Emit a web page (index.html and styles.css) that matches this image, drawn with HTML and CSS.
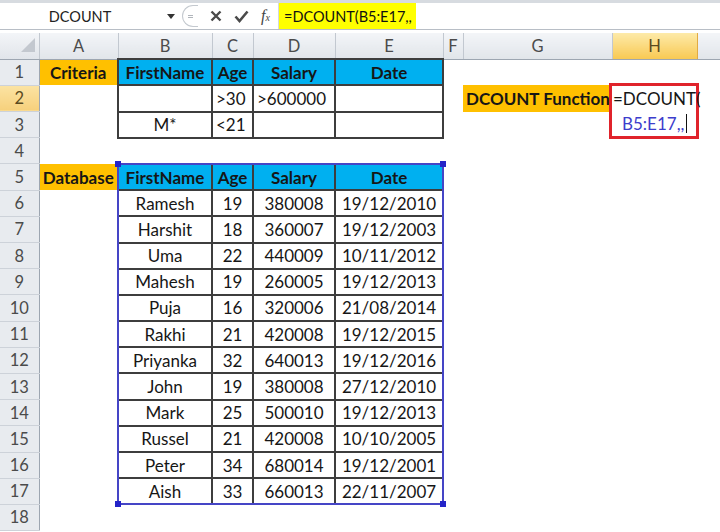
FILE: index.html
```html
<!DOCTYPE html>
<html lang="en">

<head>
    <meta charset="UTF-8">
    <meta name="viewport" content="width=device-width, initial-scale=1.0">
    <title>DCOUNT</title>
    <link rel="stylesheet" href="styles.css">
</head>

<body>
    <div class="formula-bar">
        <div class="name-box">DCOUNT</div>
        <div class="drop"><span class="caret"></span></div>
        <div class="grip"><span></span></div>
        <div class="bar-btns">
            <svg width="12" height="12" viewBox="0 0 12 12"><path d="M1.5 1.5 L10.5 10.5 M10.5 1.5 L1.5 10.5" stroke="#4a4a4a" stroke-width="2.4" fill="none"/></svg>
            <svg width="15" height="13" viewBox="0 0 15 13"><path d="M1.5 6.5 L5.5 11 L13.5 1.5" stroke="#4a4a4a" stroke-width="2.6" fill="none"/></svg>
            <span class="fx">f<small>x</small></span>
        </div>
        <div class="formula-input"><span class="hl">=DCOUNT(B5:E17,,</span></div>
    </div>

    <div class="sheet">
        <table class="grid">
            <colgroup>
                <col style="width:39px">
                <col style="width:79px">
                <col style="width:94px">
                <col style="width:41px">
                <col style="width:82px">
                <col style="width:108px">
                <col style="width:20px">
                <col style="width:149px">
                <col style="width:85px">
                <col style="width:23px">
            </colgroup>
            <tr class="col-heads">
                <th class="corner"><svg width="14" height="14" viewBox="0 0 14 14"><polygon points="14,0 14,14 0,14" fill="#c3c8cf"/></svg></th>
                <th>A</th><th>B</th><th>C</th><th>D</th><th>E</th><th>F</th><th>G</th><th class="sel">H</th><th></th>
            </tr>
            <tr>
                <td class="rh">1</td>
                <td class="orange">Criteria</td>
                <td class="b blue">FirstName</td><td class="b blue">Age</td><td class="b blue">Salary</td><td class="b blue">Date</td>
                <td></td><td></td><td></td><td></td>
            </tr>
            <tr>
                <td class="rh sel">2</td>
                <td></td>
                <td class="b"></td><td class="b left">&gt;30</td><td class="b left">&gt;600000</td><td class="b"></td>
                <td></td><td class="orange left">DCOUNT Function</td><td></td><td></td>
            </tr>
            <tr>
                <td class="rh">3</td>
                <td></td>
                <td class="b">M*</td><td class="b left">&lt;21</td><td class="b"></td><td class="b"></td>
                <td></td><td></td><td></td><td></td>
            </tr>
            <tr>
                <td class="rh">4</td>
                <td></td><td></td><td></td><td></td><td></td><td></td><td></td><td></td><td></td>
            </tr>
            <tr>
                <td class="rh">5</td>
                <td class="orange">Database</td>
                <td class="b blue">FirstName</td><td class="b blue">Age</td><td class="b blue">Salary</td><td class="b blue">Date</td>
                <td></td><td></td><td></td><td></td>
            </tr>
            <tr><td class="rh">6</td><td></td><td class="b">Ramesh</td><td class="b">19</td><td class="b">380008</td><td class="b">19/12/2010</td><td></td><td></td><td></td><td></td></tr>
            <tr><td class="rh">7</td><td></td><td class="b">Harshit</td><td class="b">18</td><td class="b">360007</td><td class="b">19/12/2003</td><td></td><td></td><td></td><td></td></tr>
            <tr><td class="rh">8</td><td></td><td class="b">Uma</td><td class="b">22</td><td class="b">440009</td><td class="b">10/11/2012</td><td></td><td></td><td></td><td></td></tr>
            <tr><td class="rh">9</td><td></td><td class="b">Mahesh</td><td class="b">19</td><td class="b">260005</td><td class="b">19/12/2013</td><td></td><td></td><td></td><td></td></tr>
            <tr><td class="rh">10</td><td></td><td class="b">Puja</td><td class="b">16</td><td class="b">320006</td><td class="b">21/08/2014</td><td></td><td></td><td></td><td></td></tr>
            <tr><td class="rh">11</td><td></td><td class="b">Rakhi</td><td class="b">21</td><td class="b">420008</td><td class="b">19/12/2015</td><td></td><td></td><td></td><td></td></tr>
            <tr><td class="rh">12</td><td></td><td class="b">Priyanka</td><td class="b">32</td><td class="b">640013</td><td class="b">19/12/2016</td><td></td><td></td><td></td><td></td></tr>
            <tr><td class="rh">13</td><td></td><td class="b">John</td><td class="b">19</td><td class="b">380008</td><td class="b">27/12/2010</td><td></td><td></td><td></td><td></td></tr>
            <tr><td class="rh">14</td><td></td><td class="b">Mark</td><td class="b">25</td><td class="b">500010</td><td class="b">19/12/2013</td><td></td><td></td><td></td><td></td></tr>
            <tr><td class="rh">15</td><td></td><td class="b">Russel</td><td class="b">21</td><td class="b">420008</td><td class="b">10/10/2005</td><td></td><td></td><td></td><td></td></tr>
            <tr><td class="rh">16</td><td></td><td class="b">Peter</td><td class="b">34</td><td class="b">680014</td><td class="b">19/12/2001</td><td></td><td></td><td></td><td></td></tr>
            <tr><td class="rh">17</td><td></td><td class="b">Aish</td><td class="b">33</td><td class="b">660013</td><td class="b">22/11/2007</td><td></td><td></td><td></td><td></td></tr>
            <tr>
                <td class="rh">18</td>
                <td></td><td></td><td></td><td></td><td></td><td></td><td></td><td></td><td></td>
            </tr>
        </table>

        <!-- range picked for the formula -->
        <div class="range">
            <i class="h tl"></i><i class="h tr"></i><i class="h bl"></i><i class="h br"></i>
        </div>

        <!-- cell being edited -->
        <div class="edit-box">
            <div>=DCOUNT(</div>
            <div class="ref">B5:E17,,<span class="cursor"></span></div>
        </div>
    </div>
</body>

</html>
```

FILE: styles.css
```css
* {
    margin: 0;
    padding: 0;
    box-sizing: border-box;
}

body {
    width: 720px;
    height: 532px;
    overflow: hidden;
    background-color: #fff;
    font-family: Lato, "Open Sans", sans-serif;
    color: #161616;
}

/* formula bar */
.formula-bar {
    height: 30px;
    display: flex;
    align-items: center;
    border-top: 3px solid #d7dbe0;
    border-bottom: 1px solid #b8bec6;
    margin-bottom: 3px;
}

.name-box {
    width: 160px;
    text-align: center;
    font-size: 14.5px;
    color: #222;
}

.drop {
    width: 22px;
    display: flex;
    justify-content: center;
}

.caret {
    border-left: 4px solid transparent;
    border-right: 4px solid transparent;
    border-top: 5px solid #333;
}

.grip {
    width: 16px;
    height: 22px;
    border: 1px solid #c4c9cf;
    border-right: none;
    border-radius: 11px 0 0 11px;
    display: flex;
    align-items: center;
    justify-content: center;
}

.grip span {
    width: 5px;
    height: 3px;
    border-top: 1px solid #b0b5bb;
    border-bottom: 1px solid #b0b5bb;
}

.bar-btns {
    width: 80px;
    display: flex;
    align-items: center;
    gap: 12px;
    padding-left: 12px;
}

.fx {
    font-family: "Liberation Serif", serif;
    font-style: italic;
    font-size: 16px;
    color: #444;
}

.fx small {
    font-size: 10px;
}

.formula-input {
    flex: 1;
    height: 26px;
    display: flex;
    align-items: stretch;
    border-left: 1px solid #d4d8dd;
}

.hl {
    background-color: #ffff00;
    font-size: 14.5px;
    padding: 0 4px 0 5px;
    display: flex;
    align-items: center;
    color: #111;
}

/* sheet */
.sheet {
    position: relative;
}

table.grid {
    border-collapse: collapse;
    table-layout: fixed;
    width: 720px;
}

.grid th {
    height: 26px;
    font-weight: normal;
    font-size: 16.5px;
    color: #4b4b4b;
    background: linear-gradient(#f3f5f8, #e1e5ea);
    border-right: 1px solid #c2c8d0;
    border-bottom: 1px solid #9da6b1;
}

.grid th.corner {
    text-align: right;
    vertical-align: bottom;
    padding: 0 4px 3px 0;
}

.grid th.sel {
    background: linear-gradient(#fdeaa9, #f8c953);
    border-right: 1px solid #e1aa43;
    color: #5a4a20;
}

.grid tr {
    height: 26.2px;
}

.grid td {
    font-size: 17px;
    text-align: center;
    white-space: nowrap;
    padding: 0 3px;
}

.grid td.rh {
    font-size: 16.5px;
    color: #4b4b4b;
    background-color: #e8ebef;
    border-right: 1px solid #9da6b1;
    border-bottom: 1px solid #cdd2d9;
}

.grid td.rh.sel {
    background: linear-gradient(#fbe3a3, #f6d07c);
    color: #5a4a20;
}

.grid td.b {
    border: 2px solid #3d3d3d;
}

.grid td.left {
    text-align: left;
}

.grid td.blue {
    background-color: #00b0f0;
    font-weight: bold;
}

.grid td.orange {
    background-color: #ffc000;
    font-weight: bold;
    overflow: hidden;
}

.range {
    position: absolute;
    left: 117px;
    top: 130px;
    width: 327px;
    height: 342px;
    border: 2px solid #4545c6;
}

.range .h {
    position: absolute;
    width: 6px;
    height: 6px;
    background-color: #2424c8;
}

.range .tl { left: -4px; top: -4px; }
.range .tr { right: -4px; top: -4px; }
.range .bl { left: -4px; bottom: -4px; }
.range .br { right: -4px; bottom: -4px; }

.edit-box {
    position: absolute;
    left: 609px;
    top: 50px;
    width: 90px;
    height: 56px;
    border: 3px solid #e0232b;
    background-color: #fff;
    font-size: 17px;
    line-height: 25px;
    padding-left: 1px;
    white-space: nowrap;
}

.edit-box .ref {
    padding-left: 9px;
    color: #3d3dcc;
    display: flex;
    align-items: center;
}

.cursor {
    display: inline-block;
    width: 1px;
    height: 19px;
    margin-left: 2px;
    background-color: #111;
}
```
